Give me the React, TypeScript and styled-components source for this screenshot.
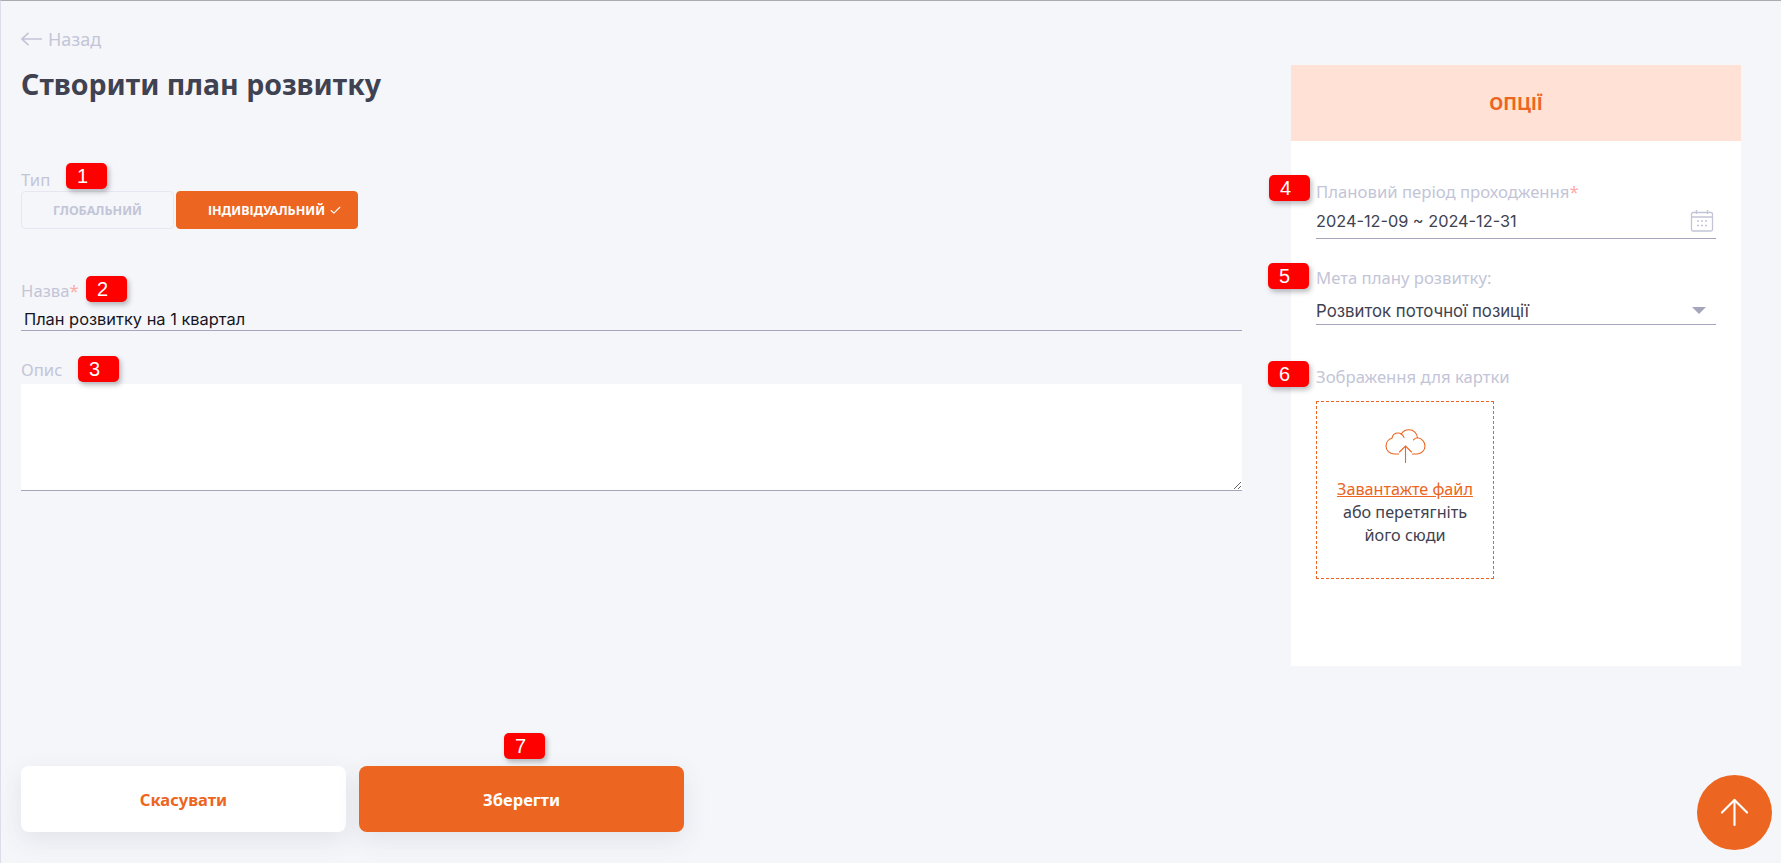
import styled, { createGlobalStyle } from "styled-components";
import { ArrowUp, Check } from "lucide-react";

const GlobalStyle = createGlobalStyle`
  html, body {
    margin: 0;
    padding: 0;
    background: #f5f6fa;
    font-family: "Noto Sans", "Open Sans", sans-serif;
  }
  * { box-sizing: border-box; }
`;

const ORANGE = "#ec6521";
const LABEL = "#c3c5d7";
const LINE = "#a5a6bb";

function Marker({ n, x, y }: { n: number; x: number; y: number }) {
  return <Badge $x={x} $y={y}>{n}</Badge>;
}

export default function App() {
  return (
    <>
      <GlobalStyle />
      <Page>
        <Columns>
          <MainColumn>
            <BackLink>
              <svg width="21" height="14" viewBox="0 0 21 14" fill="none" stroke="#c3c5d7" strokeWidth="1.6">
                <path d="M21 7H1M7.5 .8 1 7l6.5 6.2" />
              </svg>
              Назад
            </BackLink>
            <Title>Створити план розвитку</Title>

            <Field $top={65}>
              <Label>Тип</Label>
              <Marker n={1} x={45} y={-6} />
              <Toggle>
                <ToggleButton $width={153}>ГЛОБАЛЬНИЙ</ToggleButton>
                <ToggleButton $width={182} $active>
                  ІНДИВІДУАЛЬНИЙ
                  <Check size={13} strokeWidth={2} />
                </ToggleButton>
              </Toggle>
            </Field>

            <Field $top={51}>
              <Label>
                Назва<Req>*</Req>
              </Label>
              <Marker n={2} x={65} y={-4} />
              <NameInput defaultValue="План розвитку на 1 квартал" />
            </Field>

            <Field $top={28}>
              <Label>Опис</Label>
              <Marker n={3} x={57} y={-3} />
              <Description />
            </Field>
          </MainColumn>

          <OptionsPanel>
            <OptionsHeader>ОПЦІЇ</OptionsHeader>
            <OptionsBody>
              <Field $top={0}>
                <Label>
                  Плановий період проходження<Req>*</Req>
                </Label>
                <Marker n={4} x={-47} y={-6} />
                <ValueRow $size={16.3}>
                  <span>2024-12-09 ~ 2024-12-31</span>
                  <svg width="24" height="22" viewBox="0 0 24 22" fill="none" stroke="#c3c5d7" strokeWidth="1.3">
                    <rect x="1.5" y="2.5" width="21" height="18.5" rx="1.5" />
                    <path d="M1.5 7h21M6.5 0v4M17.5 0v4" />
                    <path d="M7 11h2M11 11h2M15 11h2M7 15.500h2M11 15.500h2M15 15.500h2" strokeWidth="1.5" />
                  </svg>
                </ValueRow>
              </Field>

              <Field $top={28}>
                <Label>Мета плану розвитку:</Label>
                <Marker n={5} x={-48} y={-4} />
                <ValueRow $size={16.8} $padTop={8}>
                  <span>Розвиток поточної позиції</span>
                  <Caret />
                </ValueRow>
              </Field>

              <Field $top={41}>
                <Label>Зображення для картки</Label>
                <Marker n={6} x={-48} y={-5} />
                <DropZone>
                  <svg width="41" height="34" viewBox="0 0 41 34" fill="none" stroke="#ec6521" strokeWidth="1.1" strokeLinecap="round">
                    <path d="M13.500 25H9C4.500 25 1 21.500 1 17c0-3.800 2.500-7 6-7.800C7.500 6 10 4 13 4c1.200 0 2.400.3 3.300 1C18 2.200 20.800.8 24 .8c4.600 0 8.200 3.500 8.500 8 4.300.6 7.500 4 7.500 8.200 0 4.500-3.500 8-8 8h-4.500" />
                    <path d="M16.300 5c1.200.9 2.200 2 2.700 3.400M32.500 8.800c-1.600.2-3 .9-4 2" />
                    <path d="M20.500 33.500V17M14.500 23l6-6 6 6" />
                  </svg>
                  <UploadLink>Завантажте файл</UploadLink>
                  <span>або перетягніть</span>
                  <span>його сюди</span>
                </DropZone>
              </Field>
            </OptionsBody>
          </OptionsPanel>
        </Columns>

        <Footer>
          <FooterButton>Скасувати</FooterButton>
          <FooterButton $primary>
            Зберегти
            <Marker n={7} x={145} y={-33} />
          </FooterButton>
        </Footer>

        <ScrollTop>
          <ArrowUp size={43} strokeWidth={1.2} color="#fff" />
        </ScrollTop>
      </Page>
    </>
  );
}

const Page = styled.div`
  height: 863px;
  display: flex;
  flex-direction: column;
  justify-content: space-between;
  overflow: hidden;
  border-top: 1px solid #aaaab0;
  border-left: 1px solid #dcdde6;
  padding: 0 40px 31px 20px;
`;

const Columns = styled.div`
  display: flex;
  justify-content: space-between;
  align-items: flex-start;
`;

const MainColumn = styled.main`
  width: 1221px;
  padding-top: 26px;
`;

const BackLink = styled.a`
  display: flex;
  align-items: center;
  gap: 6px;
  height: 24px;
  font-size: 18px;
  line-height: 24px;
  color: ${LABEL};
`;

const Title = styled.h1`
  margin: 13px 0 0;
  height: 40px;
  font-size: 28.5px;
  line-height: 40px;
  font-weight: 700;
  color: #404251;
`;

const Field = styled.div<{ $top: number }>`
  position: relative;
  margin-top: ${(p) => p.$top}px;
`;

const Label = styled.label`
  display: block;
  font-size: 16.7px;
  line-height: 22px;
  color: ${LABEL};
`;

const Req = styled.span`
  color: #ffa9a9;
`;

const Badge = styled.div<{ $x: number; $y: number }>`
  position: absolute;
  left: ${(p) => p.$x}px;
  top: ${(p) => p.$y}px;
  width: 41px;
  height: 26px;
  padding-right: 8px;
  display: flex;
  align-items: center;
  justify-content: center;
  border-radius: 5px;
  background: #ff0000;
  color: #fff;
  font-family: "Liberation Sans", Arial, sans-serif;
  font-size: 20px;
  font-weight: 400;
  box-shadow: 2px 3px 5px rgba(60, 60, 70, 0.35);
`;

const Toggle = styled.div`
  display: flex;
  gap: 2px;
`;

const ToggleButton = styled.div<{ $width: number; $active?: boolean }>`
  width: ${(p) => p.$width}px;
  height: 38px;
  display: flex;
  align-items: center;
  justify-content: center;
  gap: 4px;
  padding-left: ${(p) => (p.$active ? 16 : 0)}px;
  border-radius: 4px;
  border: 1px solid ${(p) => (p.$active ? ORANGE : "#e6e7f0")};
  background: ${(p) => (p.$active ? ORANGE : "transparent")};
  color: ${(p) => (p.$active ? "#fff" : LABEL)};
  font-size: 12.5px;
  font-weight: 700;
`;

const NameInput = styled.input`
  display: block;
  width: 100%;
  height: 29px;
  padding: 5px 3px 0 3px;
  border: 0;
  border-bottom: 1px solid ${LINE};
  outline: none;
  background: transparent;
  font-family: "Inter", sans-serif;
  font-size: 16.4px;
  color: #15151f;
`;

const Description = styled.textarea`
  display: block;
  width: 100%;
  height: 107px;
  margin-top: 3px;
  padding: 4px;
  border: 0;
  border-bottom: 1px solid ${LINE};
  border-radius: 0;
  outline: none;
  background: #fff;
`;

const OptionsPanel = styled.aside`
  width: 450px;
  height: 601px;
  margin-top: 64px;
  background: #fff;
`;

const OptionsHeader = styled.div`
  height: 76px;
  display: flex;
  align-items: center;
  justify-content: center;
  background: #ffe2d5;
  color: ${ORANGE};
  font-size: 18px;
  font-weight: 700;
`;

const OptionsBody = styled.div`
  padding: 40px 25px 0;
`;

const ValueRow = styled.div<{ $size: number; $padTop?: number }>`
  height: 36px;
  display: flex;
  align-items: center;
  justify-content: space-between;
  padding: ${(p) => p.$padTop ?? 0}px 2px 0 0;
  border-bottom: 1px solid ${LINE};
  font-family: "Inter", sans-serif;
  font-size: ${(p) => p.$size}px;
  color: #404251;
`;

const Caret = styled.i`
  width: 0;
  height: 0;
  margin-right: 8px;
  border-left: 7px solid transparent;
  border-right: 7px solid transparent;
  border-top: 7px solid ${LINE};
`;

const DropZone = styled.div`
  width: 178px;
  height: 178px;
  margin-top: 13px;
  padding-top: 27px;
  display: flex;
  flex-direction: column;
  align-items: center;
  border: 1px dashed ${ORANGE};
  font-size: 16.2px;
  line-height: 23px;
  color: #404251;

  svg {
    margin-bottom: 15px;
  }
`;

const UploadLink = styled.a`
  color: ${ORANGE};
  text-decoration: underline;
`;

const Footer = styled.footer`
  display: flex;
  gap: 13px;
`;

const FooterButton = styled.div<{ $primary?: boolean }>`
  position: relative;
  width: 325px;
  height: 66px;
  display: flex;
  align-items: center;
  justify-content: center;
  border-radius: 8px;
  background: ${(p) => (p.$primary ? ORANGE : "#fff")};
  color: ${(p) => (p.$primary ? "#fff" : ORANGE)};
  font-size: 16.5px;
  font-weight: 700;
  box-shadow: 0 8px 24px rgba(64, 66, 81, 0.1);
`;

const ScrollTop = styled.div`
  position: fixed;
  right: 9px;
  bottom: 13px;
  width: 75px;
  height: 75px;
  display: flex;
  align-items: center;
  justify-content: center;
  border-radius: 50%;
  background: ${ORANGE};
`;
